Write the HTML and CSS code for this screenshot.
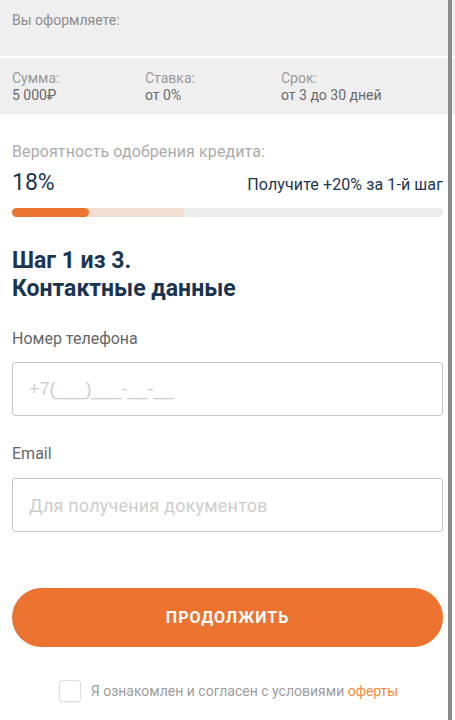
FILE: index.html
```html
<!DOCTYPE html>
<html lang="ru">
<head>
<meta charset="utf-8">
<link rel="stylesheet" href="styles.css">
</head>
<body>
<div class="page">
  <section class="top">
    <div class="intro">Вы оформляете:</div>
    <div class="terms">
      <div class="term"><span class="t-label">Сумма:</span><span class="t-value">5 000₽</span></div>
      <div class="term t2"><span class="t-label">Ставка:</span><span class="t-value">от 0%</span></div>
      <div class="term t3"><span class="t-label">Срок:</span><span class="t-value">от 3 до 30 дней</span></div>
    </div>
  </section>
  <section class="content">
    <div class="prob-label">Вероятность одобрения кредита:</div>
    <div class="prob-row">
      <span class="prob-val">18%</span>
      <span class="prob-hint">Получите +20% за 1-й шаг</span>
    </div>
    <div class="bar">
      <div class="bar-next"></div>
      <div class="bar-fill"></div>
    </div>
    <h1 class="title">Шаг 1 из 3.<br>Контактные данные</h1>
    <label class="f-label">Номер телефона</label>
    <div class="input input-phone"><span class="ph ph-phone">+7(___)___-__-__</span></div>
    <label class="f-label email">Email</label>
    <div class="input input-email"><span class="ph">Для получения документов</span></div>
    <button class="btn">ПРОДОЛЖИТЬ</button>
    <div class="agree">
      <span class="check"></span>
      <span class="agree-text">Я ознакомлен и согласен с условиями <a class="link">оферты</a></span>
    </div>
  </section>
  <div class="scrollbar"></div>
</div>
</body>
</html>
```
FILE: styles.css
```css
html, body {
  margin: 0;
  padding: 0;
  background: #ffffff;
}
body {
  font-family: Roboto, "Liberation Sans", sans-serif;
  width: 455px;
  height: 720px;
  overflow: hidden;
}
.page {
  position: relative;
  width: 455px;
  height: 720px;
}
.scrollbar {
  position: absolute;
  top: 0;
  bottom: 0;
  left: 448px;
  width: 4px;
  background: #8b8b8b;
}
.top {
  background: #efefef;
}
.intro {
  height: 58px;
  box-sizing: border-box;
  padding: 12px 12px 0;
  font-size: 14px;
  line-height: 17px;
  color: #8c8c8c;
  border-bottom: 2px solid #ffffff;
}
.terms {
  display: flex;
  height: 56px;
  box-sizing: border-box;
  padding: 12px 12px 0;
}
.term {
  display: flex;
  flex-direction: column;
  width: 133px;
  font-size: 14px;
  line-height: 17px;
}
.term.t2 { width: 136px; }
.t-label { color: #9a9a9a; }
.t-value { color: #6a6a6a; }
.content {
  padding: 0 12px;
}
.prob-label {
  margin-top: 28px;
  font-size: 16px;
  line-height: 20px;
  color: #ababab;
  letter-spacing: 0.1px;
}
.prob-row {
  display: flex;
  justify-content: space-between;
  align-items: baseline;
  margin-top: 8px;
  height: 26px;
  color: #1d3552;
}
.prob-val {
  font-size: 23px;
  line-height: 26px;
}
.prob-hint {
  font-size: 16px;
  letter-spacing: 0.1px;
}
.bar {
  position: relative;
  margin-top: 12px;
  height: 9px;
  border-radius: 5px;
  background: #ebebeb;
}
.bar-next {
  position: absolute;
  left: 0; top: 0; bottom: 0;
  width: 172px;
  border-radius: 5px 0 0 5px;
  background: #f2dfd2;
}
.bar-fill {
  position: absolute;
  left: 0; top: 0; bottom: 0;
  width: 77px;
  border-radius: 5px;
  background: #ec7431;
}
.title {
  margin: 30px 0 0;
  font-size: 23px;
  line-height: 28px;
  font-weight: 700;
  color: #1b3452;
}
.f-label {
  display: block;
  margin-top: 26px;
  font-size: 16px;
  line-height: 20px;
  color: #666666;
}
.f-label.email {
  margin-top: 28px;
}
.input {
  height: 54px;
  box-sizing: border-box;
  border: 1px solid #c6c6c6;
  border-radius: 3px;
  display: flex;
  align-items: center;
  padding: 0 16px;
}
.input-phone {
  margin-top: 13px;
}
.input-email {
  margin-top: 14px;
}
.ph {
  font-size: 18px;
  color: #cdcdcd;
  letter-spacing: 0.2px;
}
.ph-phone {
  font-family: "Liberation Sans", Arial, sans-serif;
  letter-spacing: 0;
}
.btn {
  display: block;
  width: 100%;
  margin-top: 56px;
  height: 59px;
  border: none;
  border-radius: 30px;
  background: #ec7230;
  color: #ffffff;
  font-family: Roboto, "Liberation Sans", sans-serif;
  font-size: 16px;
  font-weight: 700;
  letter-spacing: 1px;
  cursor: pointer;
}
.agree {
  display: flex;
  align-items: center;
  justify-content: center;
  gap: 10px;
  margin-top: 33px;
  height: 22px;
  padding-left: 2px;
}
.check {
  width: 20px;
  height: 20px;
  border: 1px solid #dcdcdc;
  border-radius: 3px;
  box-shadow: 0 1px 1px rgba(0,0,0,0.06);
}
.agree-text {
  font-size: 14px;
  color: #9d9d9d;
}
.link {
  color: #ef8a3e;
}
```
